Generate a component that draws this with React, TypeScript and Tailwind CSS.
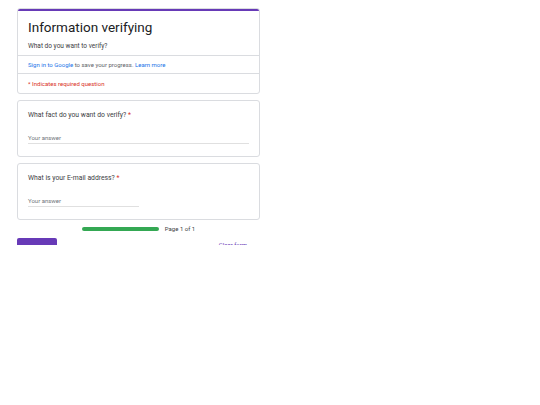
import React from 'react';

const questions = [
  { id: 'fact', label: 'What fact do you want do verify?', width: 'w-full' },
  { id: 'email', label: 'What is your E-mail address?', width: 'w-[111px]' },
];

export default function App() {
  return (
    <div className="h-[245px] overflow-hidden bg-white font-['Roboto',sans-serif] text-[#202124]">
      <div className="w-[243px] ml-[17px] pt-[8px] flex flex-col gap-[6px]">
        <div className="bg-white rounded-[3px] border border-[#dadce0] overflow-hidden">
          <div className="h-[3px] bg-[#673ab7] -mx-px -mt-px" />
          <div className="px-[10px] pt-[6px] pb-[4px]">
            <h1 className="text-[13.5px] leading-[20px]">Information verifying</h1>
            <p className="text-[6.5px] leading-[10px] mt-[4px] text-[#3c4043]">What do you want to verify?</p>
          </div>
          <div className="border-t border-[#dadce0] px-[10px] h-[18px] flex items-center text-[6px] text-[#5f6368]">
            <span className="text-[#1a73e8]">Sign in to Google</span>
            <span>&nbsp;to save your progress.&nbsp;</span>
            <span className="text-[#1a73e8]">Learn more</span>
          </div>
          <div className="border-t border-[#dadce0] px-[10px] h-[20px] flex items-center text-[6px] text-[#d93025]">
            * Indicates required question
          </div>
        </div>

        {questions.map((q) => (
          <div key={q.id} className="bg-white rounded-[3px] border border-[#dadce0] px-[10px] pt-[9px] pb-[12px]">
            <div className="text-[6.8px] leading-[10px] text-[#3c4043]">
              {q.label} <span className="text-[#d93025]">*</span>
            </div>
            <div className={`${q.width} mt-[14px] border-b border-[#e0e0e0] text-[6px] leading-[8px] pb-[1px] text-[#70757a]`}>
              Your answer
            </div>
          </div>
        ))}

        <div className="flex items-center justify-center gap-[6px] mt-[-2px]">
          <div className="w-[77px] h-[4px] rounded-full bg-[#34a853]" />
          <span className="text-[6px] text-[#3c4043]">Page 1 of 1</span>
        </div>

        <div className="flex items-start justify-between mt-[-1px]">
          <button className="w-[40px] h-[18px] rounded-[2px] bg-[#673ab7] text-white text-[6px]">Submit</button>
          <span className="text-[6px] leading-[14px] text-[#673ab7] mr-[13px]">Clear form</span>
        </div>
      </div>
    </div>
  );
}
